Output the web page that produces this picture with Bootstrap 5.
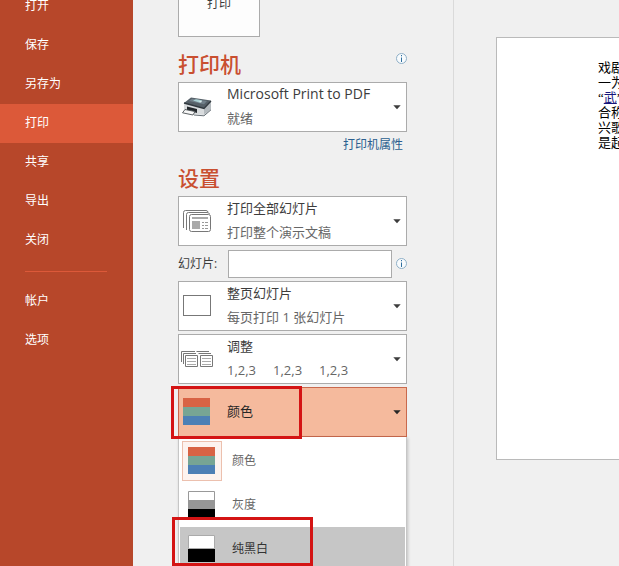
<!DOCTYPE html>
<html lang="zh-CN">
<head>
<meta charset="utf-8">
<meta name="viewport" content="width=device-width, initial-scale=1">
<title>打印</title>
<link href="https://cdn.jsdelivr.net/npm/bootstrap@5.3.0/dist/css/bootstrap.min.css" rel="stylesheet">
<style>
  body { background: #f0f0f0; color: #3c3c3c; font: 13px/24px "Open Sans", "Noto Sans CJK SC", sans-serif; }
  .side { flex: 0 0 133px; background: #b7472a; overflow: hidden; }
  .side .nav { margin-top: -13px; }
  .side .nav-link, .side .nav-link:hover { padding: 7px 25px 8px; color: #fff; font-size: 12px; line-height: 24px; }
  .side .nav-link.active { background: #dc5939; }
  .side hr { margin: 11px 26px 10px 25px; border-top: 1px solid #dc5939; opacity: 1; }
  .settings { flex: 0 0 321px; padding: 0 46px 0 45px; border-right: 1px solid #dadada; }
  .print-btn { width: 82px; height: 82px; margin-top: -45px; padding: 0 0 20px; background: #fdfdfd; border: 1px solid #ababab; color: #3c3c3c; font-size: 12px; line-height: 24px; }
  .section-title { margin: 0; color: #c94f30; font-size: 21px; line-height: 32px; }
  .first-title { padding-top: 11px; height: 45px; }
  .second-title { padding-top: 5px; height: 39px; }
  .picker { width: 100%; height: 50px; padding: 0 5px 0 0; background: #fff; border: 1px solid #ababab; color: #3c3c3c; text-align: left; line-height: 24px; }
  .picker-icon { flex: 0 0 48px; height: 48px; }
  .picker-text { flex: 1 1 auto; padding-bottom: 3px; }
  .picker-main, .picker-sub { display: block; line-height: 24px; white-space: pre; }
  .picker-main.latin { font-size: 14px; }
  .picker-sub { color: #666; }
  .copies { display: flex; gap: 17px; }
  .picker.open-state { background: #f5ba9d; border-color: #c9694d; color: #262626; }
  .printer-link { color: #2b5f8f; font-size: 12px; line-height: 24px; text-decoration: none; }
  .range-row { height: 35px; }
  .range-label { flex: 0 0 50px; font-size: 12px; line-height: 24px; white-space: nowrap; }
  .range-input { width: 164px; height: 28px; padding: 0 6px; border: 1px solid #ababab; background: #fff; }
  .info-btn { width: 12px; height: 13px; padding: 0; border: 0; background: none; }
  .stack { row-gap: 3px; }
  .color-menu { --bs-dropdown-min-width: 100%; top: 100%; left: 0; padding: 2px 1px; border: 1px solid #c6c6c6; border-top: 0; border-radius: 0; background: #fff; box-shadow: 1px 1px 3px #0003; font-size: 12px; }
  .color-menu .dropdown-item { height: 44px; padding: 0 2px; gap: 10px; color: #666; line-height: 24px; }
  .color-menu .dropdown-item.hovered { background: #c6c6c6; color: #333; }
  .swatch { width: 40px; height: 40px; border: 1px solid transparent; }
  .swatch.chosen { border-color: #ecc0ae; background: #fdf3ef; }
  .frame-mark { position: absolute; border: 3px solid #d41414; pointer-events: none; z-index: 1100; }
  .mark-current { left: -7px; top: -1px; width: 131px; height: 53px; }
  .mark-option { left: -6px; top: 130px; width: 141px; height: 49px; }
  .preview { padding: 37px 0 0 42px; min-width: 0; }
  .slide { height: 423px; border: 1px solid #bababa; border-right: 0; background: #fff; overflow: hidden; }
  .slide p { margin: 22px 0 0 101px; color: #000; font: 13px/15px "Liberation Serif", "Noto Sans CJK SC", sans-serif; white-space: nowrap; }
  .slide a { color: #15157c; }
</style>
<script src="https://cdn.jsdelivr.net/npm/bootstrap@5.3.0/dist/js/bootstrap.bundle.min.js"></script>
</head>
<body>
<svg class="d-none" aria-hidden="true">
  <symbol id="info" viewBox="0 0 13 13"><circle cx="6.500" cy="6.500" r="5" fill="#f8fbfd" stroke="#8fb0c8"/><path d="M6 3h1v1.300H6zM6 5.500h1V10H6z" fill="#2f6f9f"/></symbol>
  <symbol id="caret" viewBox="0 0 8 5"><path d="M.3.300h7.400L4 4.300z" fill="currentColor"/></symbol>
  <symbol id="colors" viewBox="0 0 27 27"><path fill="#d86344" d="M0 0h27v9H0z"/><path fill="#77a594" d="M0 9h27v9H0z"/><path fill="#4d80b5" d="M0 18h27v9H0z"/></symbol>
</svg>
<div class="d-flex vh-100 overflow-hidden">
  <aside class="side">
    <nav class="nav flex-column">
      <a class="nav-link" href="#">打开</a>
      <a class="nav-link" href="#">保存</a>
      <a class="nav-link" href="#">另存为</a>
      <a class="nav-link active" href="#" aria-current="page">打印</a>
      <a class="nav-link" href="#">共享</a>
      <a class="nav-link" href="#">导出</a>
      <a class="nav-link" href="#">关闭</a>
      <hr>
      <a class="nav-link" href="#">帐户</a>
      <a class="nav-link" href="#">选项</a>
    </nav>
  </aside>

  <main class="settings">
    <button type="button" class="print-btn d-flex justify-content-center align-items-end">打印</button>

    <div class="first-title d-flex justify-content-between">
      <h2 class="section-title">打印机</h2>
      <button type="button" class="info-btn d-flex mt-1" aria-label="打印机信息"><svg class="flex-shrink-0" width="13" height="13"><use href="#info"/></svg></button>
    </div>
    <button type="button" class="picker d-flex align-items-center" aria-haspopup="listbox">
      <svg class="picker-icon" viewBox="0 0 48 48" aria-hidden="true">
        <path d="M5 20 12 14.500l20 3-7 8z" fill="#566068"/><path d="M10 18 13 15.700l15 2.300-3 3.300z" fill="#71808a"/>
        <path d="m14 17.500 3-1.200 6 1-2 2.500z" fill="#a9cfd2"/><path d="m20 18.500 3-.7-1 2z" fill="#e4f0ef"/>
        <path d="m5 20 20 5.500V32l-12-1-8-4z" fill="#d9dcde"/><path d="m25 25.500 7-7.500v8.500L25 32z" fill="#b4babe"/>
        <path d="m5 20 20 5.500 7-7.500" fill="none" stroke="#30383e" stroke-width="1.300"/>
        <path d="m8 23.500 10 2.500v4L8 27z" fill="#23282c"/><path d="m6 26.500 10 2-2 3.500-10.500-2.200z" fill="#f7f7f7" stroke="#4b5054" stroke-width=".9"/>
        <path d="m15 32 10 .8 7-6" fill="none" stroke="#687178"/>
      </svg>
      <span class="picker-text"><span class="picker-main latin">Microsoft Print to PDF</span><span class="picker-sub">就绪</span></span>
      <svg width="8" height="5"><use href="#caret"/></svg>
    </button>
    <div class="text-end pe-1"><a class="printer-link" href="#">打印机属性</a></div>

    <div class="second-title"><h2 class="section-title">设置</h2></div>
    <button type="button" class="picker d-flex align-items-center" aria-haspopup="listbox">
      <svg class="picker-icon" viewBox="0 0 48 48" fill="none" stroke="#777" aria-hidden="true">
        <path d="M4.500 31V15.500q0-2 2-2H27q1.500 0 2 1.500M7.500 33V17.500q0-2 2-2H28q2 0 2.500 1.500"/>
        <rect x="10.500" y="17.500" width="21" height="17" rx="2" fill="#fff"/>
        <path d="M13 21h16" stroke="#aaa" stroke-width="2"/><path d="M13 24h8v8h-8z" fill="#aaa" stroke="none"/>
        <path d="M23 25.500h2m1 0h3M23 28.500h2m1 0h3M23 31.500h2m1 0h3" stroke="#999"/>
      </svg>
      <span class="picker-text"><span class="picker-main">打印全部幻灯片</span><span class="picker-sub">打印整个演示文稿</span></span>
      <svg width="8" height="5"><use href="#caret"/></svg>
    </button>

    <div class="range-row d-flex align-items-center">
      <label class="range-label" for="range">幻灯片:</label>
      <input class="range-input" id="range" type="text">
      <button type="button" class="info-btn d-flex ms-auto" aria-label="幻灯片信息"><svg class="flex-shrink-0" width="13" height="13"><use href="#info"/></svg></button>
    </div>

    <div class="stack d-grid">
      <button type="button" class="picker d-flex align-items-center" aria-haspopup="listbox">
        <svg class="picker-icon" viewBox="0 0 48 48" aria-hidden="true"><rect x="4.500" y="13.500" width="27" height="20" fill="#fff" stroke="#777"/></svg>
        <span class="picker-text"><span class="picker-main">整页幻灯片</span><span class="picker-sub">每页打印 1 张幻灯片</span></span>
        <svg width="8" height="5"><use href="#caret"/></svg>
      </button>
      <button type="button" class="picker d-flex align-items-center" aria-haspopup="listbox">
        <svg class="picker-icon" viewBox="0 0 48 48" fill="none" stroke="#777" aria-hidden="true">
          <path d="M2.500 27V16.500H16M4.500 29V18.500H17M17.500 16.500H30M19.500 18.500H32"/>
          <path d="M6.500 20.500h12v11h-12zM21.500 20.500h12v11h-12z" fill="#fff"/>
          <path d="M8 23.500h9M8 26.500h9M8 29.500h9M23 23.500h9M23 26.500h9M23 29.500h9" stroke="#aaa"/>
        </svg>
        <span class="picker-text"><span class="picker-main">调整</span><span class="picker-sub copies"><span>1,2,3</span><span>1,2,3</span><span>1,2,3</span></span></span>
        <svg width="8" height="5"><use href="#caret"/></svg>
      </button>
      <div class="dropdown">
        <button type="button" class="picker open-state d-flex align-items-center" aria-haspopup="listbox" aria-expanded="true">
          <svg class="picker-icon" viewBox="0 0 48 48" aria-hidden="true"><use href="#colors" x="4" y="10" width="27" height="27"/></svg>
          <span class="picker-text">颜色</span>
          <svg width="8" height="5"><use href="#caret"/></svg>
        </button>
        <div class="dropdown-menu color-menu show" role="listbox">
          <button type="button" class="dropdown-item d-flex align-items-center" role="option" aria-selected="true">
            <svg class="swatch chosen" viewBox="0 0 38 38" aria-hidden="true"><use href="#colors" x="5" y="5" width="27" height="27"/></svg><span>颜色</span>
          </button>
          <button type="button" class="dropdown-item d-flex align-items-center" role="option" aria-selected="false">
            <svg class="swatch" viewBox="0 0 38 38" aria-hidden="true"><path d="M5.500 5.500h26v9h-26z" fill="#fff" stroke="#999"/><path d="M5 14h27v9H5z" fill="#969696"/><path d="M5 23h27v9H5z"/></svg><span>灰度</span>
          </button>
          <button type="button" class="dropdown-item hovered d-flex align-items-center" role="option" aria-selected="false">
            <svg class="swatch" viewBox="0 0 38 38" aria-hidden="true"><path d="M5.500 5.500h26v13h-26z" fill="#fff" stroke="#aaa"/><path d="M5 19h27v13H5z"/></svg><span>纯黑白</span>
          </button>
        </div>
        <div class="frame-mark mark-current"></div>
        <div class="frame-mark mark-option"></div>
      </div>
    </div>
  </main>

  <section class="preview flex-grow-1" aria-label="预览">
    <div class="slide">
      <p>戏剧<br>一为<br>“<a href="#">武</a>”<br>合称<br>兴歌<br>是起</p>
    </div>
  </section>
</div>
</body>
</html>
